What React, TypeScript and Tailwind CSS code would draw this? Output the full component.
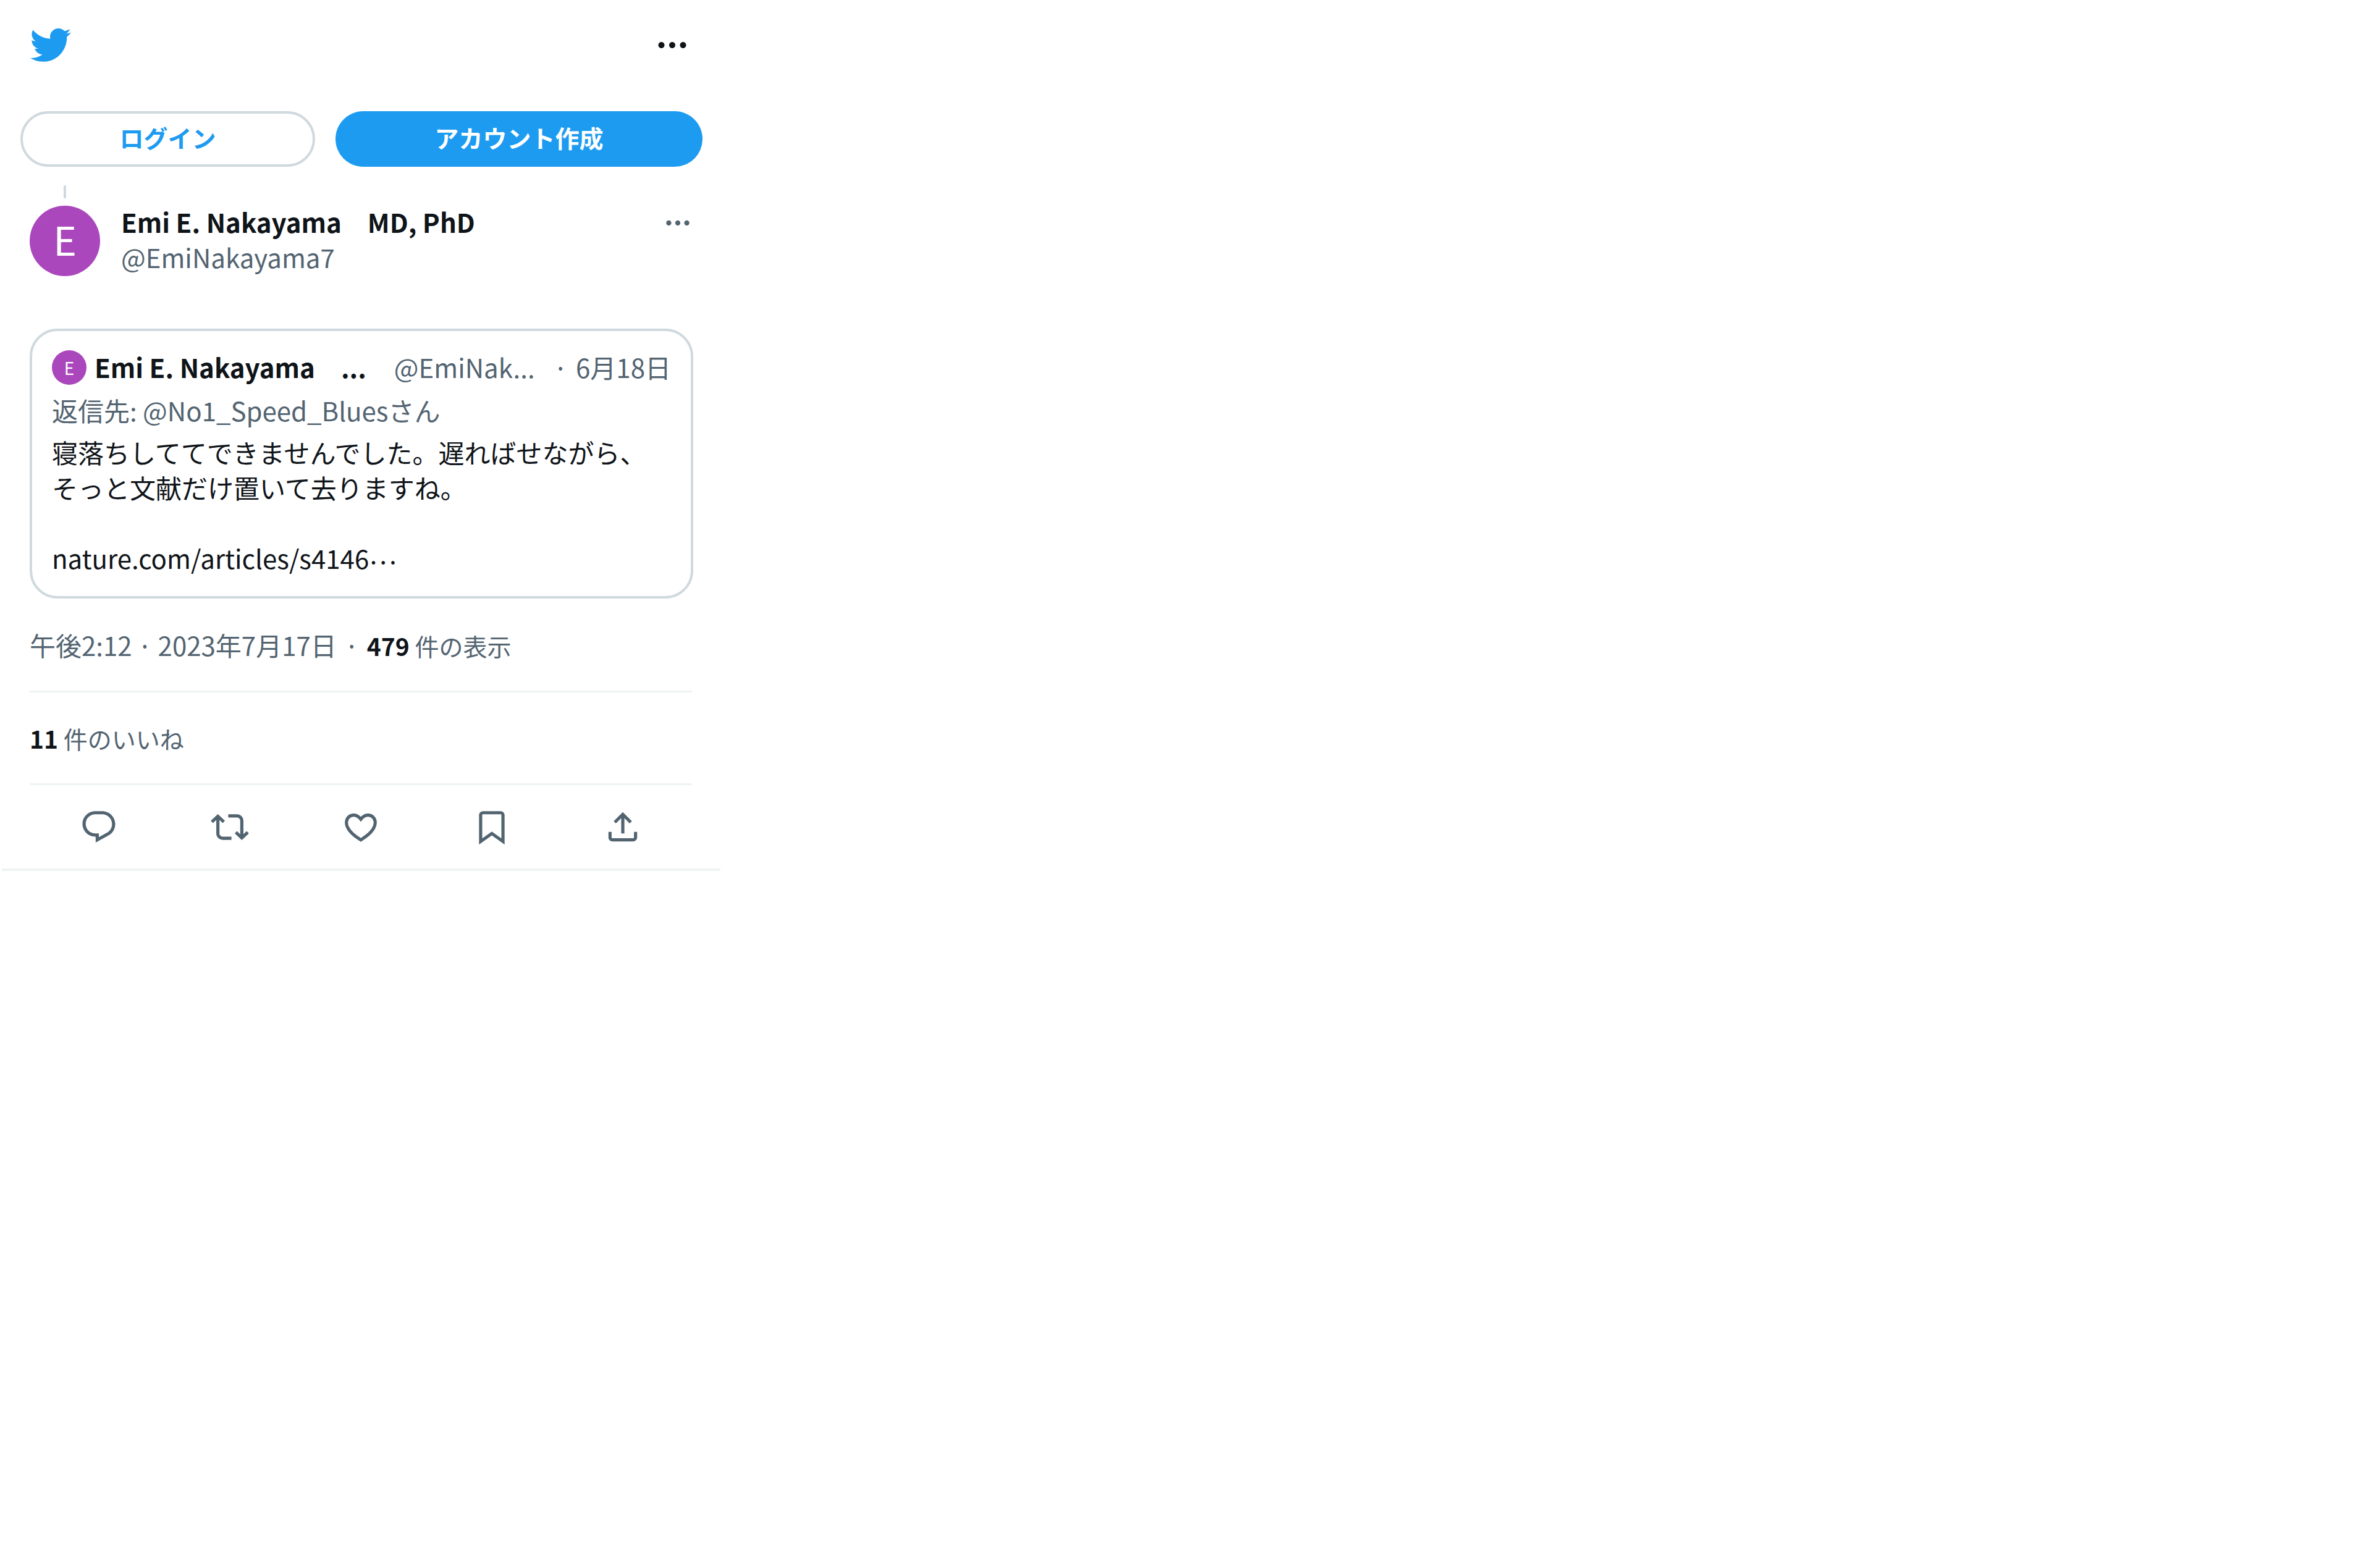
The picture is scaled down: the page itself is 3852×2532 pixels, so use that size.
import React from 'react';

const font = { fontFamily: '"Noto Sans CJK JP", sans-serif' };

const Icon: React.FC<{ d: string; className: string }> = ({ d, className }) => (
  <svg viewBox="0 0 24 24" className={className} fill="currentColor">
    <path d={d} />
  </svg>
);

const DOTS = 'M3 12c0-1.1.9-2 2-2s2 .9 2 2-.9 2-2 2-2-.9-2-2zm9 2c1.1 0 2-.9 2-2s-.9-2-2-2-2 .9-2 2 .9 2 2 2zm7 0c1.1 0 2-.9 2-2s-.9-2-2-2-2 .9-2 2 .9 2 2 2z';
const BIRD = 'M23.643 4.937c-.835.37-1.732.62-2.675.733.962-.576 1.7-1.49 2.048-2.578-.9.534-1.897.922-2.958 1.13-.85-.904-2.06-1.47-3.4-1.47-2.572 0-4.658 2.086-4.658 4.66 0 .364.042.718.12 1.06-3.873-.195-7.304-2.05-9.602-4.868-.4.69-.63 1.49-.63 2.342 0 1.616.823 3.043 2.072 3.878-.764-.025-1.482-.234-2.11-.583v.06c0 2.257 1.605 4.14 3.737 4.568-.392.106-.803.162-1.227.162-.3 0-.593-.028-.877-.082.593 1.85 2.313 3.198 4.352 3.234-1.595 1.25-3.604 1.995-5.786 1.995-.376 0-.747-.022-1.112-.065 2.062 1.323 4.51 2.093 7.14 2.093 8.57 0 13.255-7.098 13.255-13.254 0-.2-.005-.402-.014-.602.91-.658 1.7-1.477 2.323-2.41z';

const actions = [
  'M1.751 10c0-4.42 3.584-8 8.005-8h4.366c4.49 0 8.129 3.64 8.129 8.13 0 2.96-1.607 5.68-4.196 7.11l-8.054 4.46v-3.69h-.067c-4.49.1-8.183-3.51-8.183-8.01zm8.005-6c-3.317 0-6.005 2.69-6.005 6 0 3.37 2.77 6.08 6.138 6.01l.351-.01h1.761v2.3l5.087-2.81c1.951-1.08 3.163-3.13 3.163-5.36 0-3.39-2.744-6.13-6.129-6.13H9.756z',
  'M4.5 3.88l4.432 4.14-1.364 1.46L5.5 7.55V16c0 1.1.896 2 2 2H13v2H7.5c-2.209 0-4-1.79-4-4V7.55L1.432 9.48.068 8.02 4.5 3.88zM16.5 6H11V4h5.5c2.209 0 4 1.79 4 4v8.45l2.068-1.93 1.364 1.46-4.432 4.14-4.432-4.14 1.364-1.46 2.068 1.93V8c0-1.1-.896-2-2-2z',
  'M16.697 5.5c-1.222-.06-2.679.51-3.89 2.16l-.805 1.09-.806-1.09C9.984 6.01 8.526 5.44 7.304 5.5c-1.243.07-2.349.78-2.91 1.91-.552 1.12-.633 2.78.479 4.82 1.074 1.97 3.257 4.27 7.129 6.61 3.87-2.34 6.052-4.64 7.126-6.61 1.111-2.04 1.03-3.7.477-4.82-.561-1.13-1.666-1.84-2.908-1.91zm4.187 7.69c-1.351 2.48-4.001 5.12-8.379 7.67l-.503.3-.504-.3c-4.379-2.55-7.029-5.19-8.382-7.67-1.36-2.5-1.41-4.86-.514-6.67.887-1.79 2.647-2.91 4.601-3.01 1.651-.09 3.368.56 4.798 2.01 1.429-1.45 3.146-2.1 4.796-2.01 1.954.1 3.714 1.22 4.601 3.01.896 1.81.846 4.17-.514 6.67z',
  'M4 4.5C4 3.12 5.119 2 6.5 2h11C18.881 2 20 3.12 20 4.5v18.44l-8-5.71-8 5.71V4.5zM6.5 4c-.276 0-.5.22-.5.5v14.56l6-4.29 6 4.29V4.5c0-.28-.224-.5-.5-.5h-11z',
  'M12 2.59l5.7 5.7-1.41 1.42L13 6.41V16h-2V6.41l-3.3 3.3-1.41-1.42L12 2.59zM21 15l-.02 3.51c0 1.38-1.12 2.49-2.5 2.49H5.5C4.11 21 3 19.88 3 18.5V15h2v3.5c0 .28.22.5.5.5h12.98c.28 0 .5-.22.5-.5L19 15h2z',
];

export default function App() {
  return (
    <div className="min-h-[2532px] bg-white text-[#0f1419]" style={font}>
      <div className="w-[1168px]">
        {/* Top bar */}
        <div className="flex h-[146px] items-center justify-between pl-[46px] pr-[50px] text-[#0f1419]">
          <Icon d={BIRD} className="h-[70px] w-[70px] text-[#1d9bf0]" />
          <Icon d={DOTS} className="h-[60px] w-[60px]" />
        </div>

        {/* Buttons */}
        <div className="mt-[34px] flex gap-[33px] pl-[33px]">
          <button className="h-[90px] w-[477px] rounded-full border-[4px] border-[#cfd9de] pb-[5px] text-[39px] font-bold text-[#1d9bf0]">
            ログイン
          </button>
          <button className="h-[90px] w-[594px] rounded-full bg-[#1d9bf0] pb-[5px] text-[39px] font-bold text-white">
            アカウント作成
          </button>
        </div>

        {/* Author */}
        <div className="px-[48px]">
          <div className="ml-[55px] mt-[30px] h-[21px] w-[4px] bg-[#cfd9de]" />
          <div className="mt-[12px] flex h-[114px] items-start">
            <div className="flex h-[114px] w-[114px] items-center justify-center rounded-full bg-[#ab47bc] pb-[8px] text-[64px] leading-none text-white">
              E
            </div>
            <div className="-mt-[3px] ml-[34px] flex-1">
              <div className="text-[42px] font-bold leading-[57px]">Emi E. Nakayama　MD, PhD</div>
              <div className="text-[42px] leading-[57px] text-[#536471]">@EmiNakayama7</div>
            </div>
            <Icon d={DOTS} className="-mr-[2px] mt-[3px] h-[50px] w-[50px] text-[#536471]" />
          </div>

          {/* Quoted tweet */}
          <div className="-mr-[2px] mt-[85px] h-[437px] rounded-[45px] border-[4px] border-[#cfd9de] pl-[32px] pr-[32px] pt-[31px] text-[42px]">
            <div className="flex h-[56px] items-center">
              <div className="flex h-[56px] w-[56px] items-center justify-center rounded-full bg-[#ab47bc] text-[28px] text-white">
                E
              </div>
              <span className="ml-[13px] pb-[4px] font-bold">Emi E. Nakayama</span>
              <span className="ml-[42px] pb-[4px] font-bold">...</span>
              <span className="ml-[45px] pb-[4px] text-[#536471]">@EmiNak...</span>
              <span className="ml-auto pb-[4px] text-[#536471]">·</span>
              <span className="ml-[13px] pb-[4px] text-[#536471]">6月18日</span>
            </div>
            <div className="mt-[12px] leading-[57px] text-[#536471]">返信先: @No1_Speed_Bluesさん</div>
            <div className="mt-[11px] leading-[57px]">
              <div>寝落ちしててできませんでした。遅ればせながら、</div>
              <div>そっと文献だけ置いて去りますね。</div>
              <div className="h-[57px]" />
              <div>
                nature.com/articles/s4146<span className="relative -top-[8px]">…</span>
              </div>
            </div>
          </div>

          {/* Meta */}
          <div className="mt-[46px] flex h-[57px] items-baseline text-[42px] leading-[57px] text-[#536471]">
            <span>午後2:12</span>
            <span className="w-[42px] text-center">·</span>
            <span>2023年7月17日</span>
            <span className="w-[49px] text-center">·</span>
            <span className="text-[39px]">
              <span className="font-bold text-[#0f1419]">479</span> 件の表示
            </span>
          </div>
          <div className="mt-[46px] h-[3px] bg-[#eff3f4]" />
          <div className="mt-[46px] h-[57px] text-[39px] leading-[57px] text-[#536471]">
            <span className="font-bold text-[#0f1419]">11</span> 件のいいね
          </div>
          <div className="mt-[44px] h-[3px] bg-[#eff3f4]" />

          {/* Actions */}
          <div className="flex h-[135px] items-center justify-center gap-[150px] text-[#536471]">
            {actions.map((d) => (
              <Icon key={d} d={d} className="h-[62px] w-[62px]" />
            ))}
          </div>
        </div>
        <div className="ml-[3px] h-[4px] w-[1163px] bg-[#eff3f4]" />
      </div>
    </div>
  );
}
